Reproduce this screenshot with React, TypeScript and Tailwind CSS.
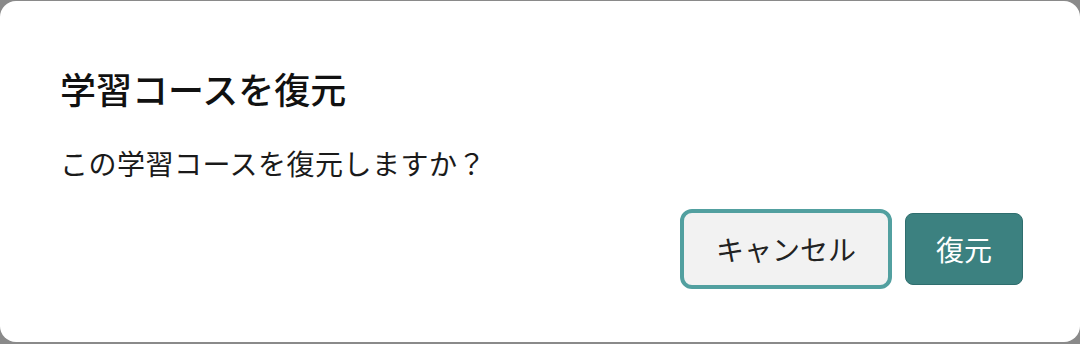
export default function App() {
  const font = { fontFamily: '"Noto Sans CJK JP", "Noto Sans", sans-serif' };

  return (
    <div className="h-[344px] w-[1080px] bg-[#8a8a8a] pt-px" style={font}>
      <div className="flex h-[341px] flex-col rounded-[16px] bg-white pl-[60px] pr-[57px] pt-[67px]">
        <h2 className="text-[36px] leading-[40px] font-medium text-[#111]">学習コースを復元</h2>
        <p className="mt-[39px] text-[28px] leading-[32px] tracking-[0.5px] text-[#1a1a1a]">この学習コースを復元しますか？</p>
        <div className="mt-[34px] flex justify-end gap-[17px]">
          <button className="h-[72px] rounded-[8px] bg-[#f2f2f2] px-[32px] text-[28px] text-[#222] outline-[4px] outline-[#52a0a0] outline-solid">
            キャンセル
          </button>
          <button className="h-[72px] rounded-[8px] border border-[#2f6e6e] bg-[#3c8180] px-[30px] text-[28px] text-white">
            復元
          </button>
        </div>
      </div>
    </div>
  );
}
